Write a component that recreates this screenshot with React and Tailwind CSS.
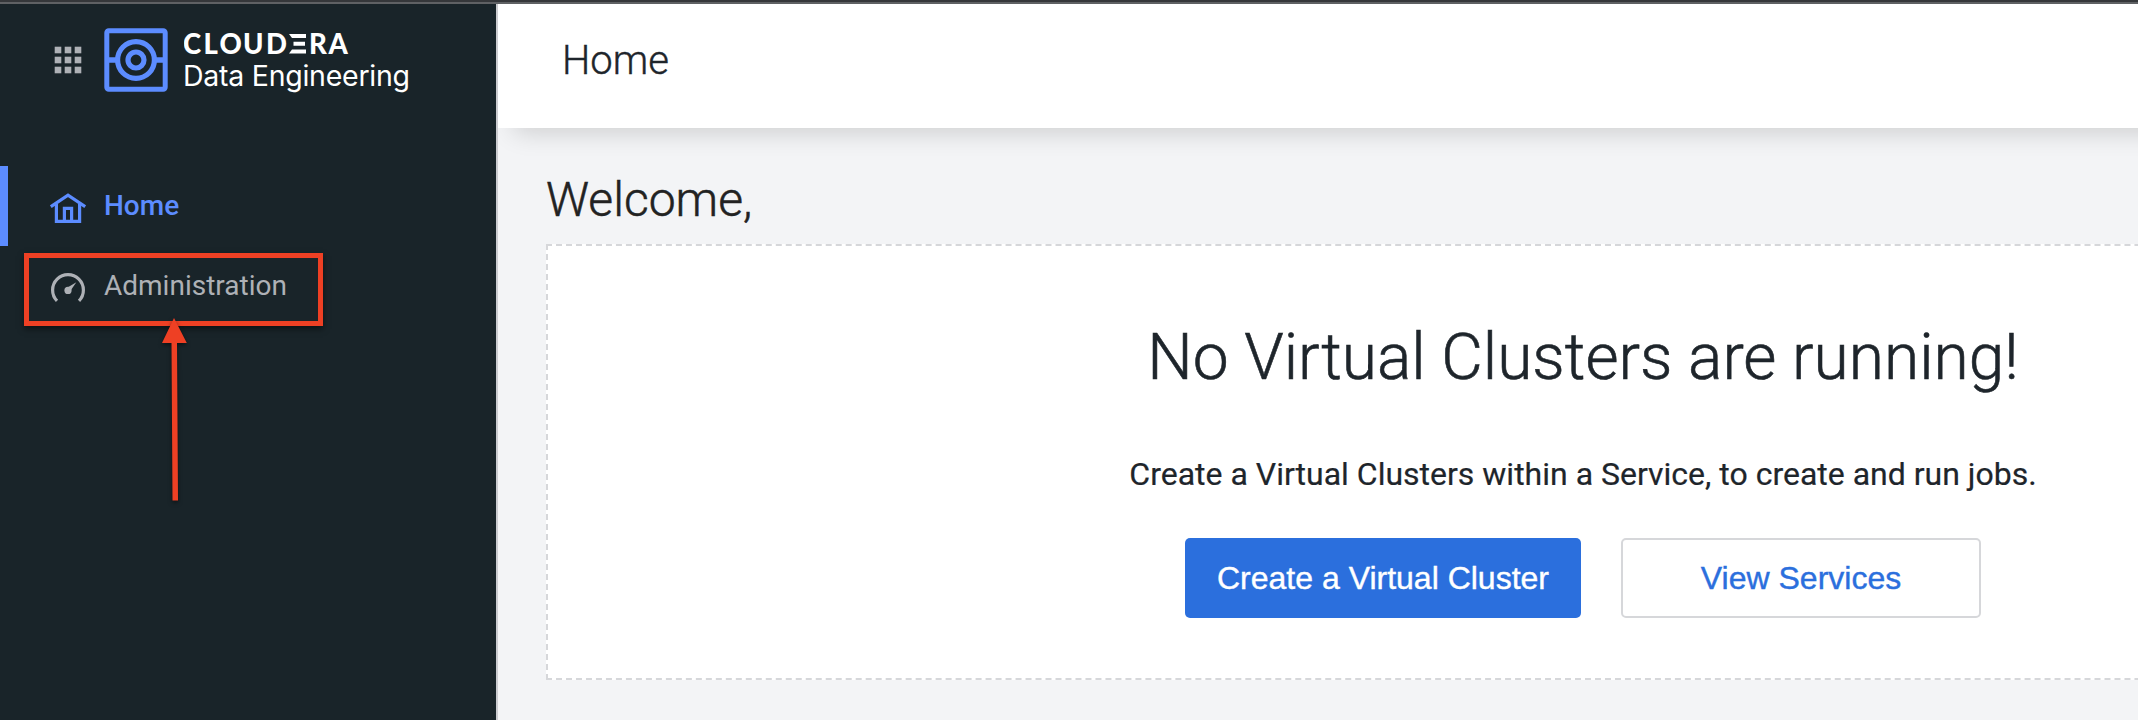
const ROBOTO = "font-['Roboto',sans-serif]";

function AppsGrid() {
  return (
    <svg className="block h-7 w-7 shrink-0" viewBox="0 0 28 28" fill="#aeb1b6">
      {[0.7, 10.7, 20.7].map((y) =>
        [0.7, 10.7, 20.7].map((x) => (
          <rect key={`${x}-${y}`} x={x} y={y} width="6.6" height="6.6" />
        ))
      )}
    </svg>
  );
}

function BrandMark() {
  return (
    <svg className="block h-16 w-16 shrink-0" viewBox="0 0 64 64" fill="none" stroke="#5c8cff" strokeWidth="5">
      <rect x="2.8" y="2.8" width="58.4" height="58.4" rx="2" />
      <circle cx="32" cy="32" r="18.4" strokeWidth="5.2" />
      <circle cx="32" cy="32" r="8" strokeWidth="5.2" />
      <path d="M4 32h10M50 32h10" strokeWidth="5.4" />
    </svg>
  );
}

function HomeIcon() {
  return (
    <svg className="block h-[31px] w-9 shrink-0" viewBox="0 0 36 31" fill="none" stroke="#5c8cff" strokeWidth="3.2">
      <path d="M.8 13.6 18 2.1l17.2 11.5" />
      <path d="M6.400 11v17.400h23.200V11" />
      <path d="M14.400 28V15.400h7.200V28" />
    </svg>
  );
}

function GaugeIcon() {
  return (
    <svg className="block h-[30px] w-9 shrink-0" viewBox="0 0 36 30" fill="none" stroke="#aeb1b6" strokeWidth="3.2">
      <path d="M7 27.8A15.4 15.4 0 1 1 29 27.8" />
      <circle cx="18" cy="17.4" r="3.6" fill="#aeb1b6" stroke="none" />
      <path d="M16.6 15 26.300 9.200 19.8 18.8z" fill="#aeb1b6" stroke="none" />
    </svg>
  );
}

function Sidebar() {
  return (
    <aside className="relative flex w-[498px] shrink-0 flex-col border-r-2 border-[#cbccd0] bg-[#192429]">
      <div className="flex h-[162px] items-start pt-6 pl-[54px]">
        <div className="pt-[18px]">
          <AppsGrid />
        </div>
        <div className="ml-[22px]">
          <BrandMark />
        </div>
        <svg className="ml-4 block h-[68px] w-[240px]" viewBox="0 0 240 68" fill="#ffffff">
          <g className="font-['Lato',sans-serif] text-[27.5px] font-black">
            <text x="-1 19.5 35.500 59 82" y="25.5">CLOUD</text>
            <text x="125 144.500" y="25.5">RA</text>
          </g>
          <path d="M105 6h17v4h-14zM109.500 13.800h11.500v4h-11.500zM108 21.500h14v4H105z" />
          <text x="-1" y="57.500" textLength="227" lengthAdjust="spacing" className="font-['Inter',sans-serif] text-[28.5px]">
            Data Engineering
          </text>
        </svg>
      </div>
      <nav className={`flex flex-col text-[28px] leading-10 ${ROBOTO}`}>
        <a className="flex h-20 items-center border-l-8 border-[#5c8cff] pl-[42px] font-medium text-[#5c8cff]">
          <span className="pt-1"><HomeIcon /></span>
          <span className="ml-[18px]">Home</span>
        </a>
        <a className="flex h-20 items-center pl-[50px] text-[#aeb1b6]">
          <span className="pt-1"><GaugeIcon /></span>
          <span className="ml-[18px]">Administration</span>
        </a>
      </nav>
      <div className="absolute top-[249px] left-6 h-[73px] w-[299px] border-[5px] border-[#ee4024] shadow-[0_3px_6px_rgba(0,0,0,0.5)]" />
      <svg
        className="absolute top-[310px] left-[154px] h-[196px] w-10 drop-shadow-[0_2px_2px_rgba(0,0,0,0.5)]"
        viewBox="0 0 40 196"
        fill="#ee4024"
      >
        <path d="M20 4 32.800 29H23l1 157.500h-5.500L17.500 29H8z" />
      </svg>
    </aside>
  );
}

function EmptyState() {
  return (
    <section className="flex h-[436px] w-[2074px] flex-col items-center border-2 border-dashed border-[#d6d7da] bg-white pt-[74px] text-[#1e252b]">
      <h2 className="text-[64px] leading-[76px] font-light whitespace-nowrap [-webkit-text-stroke:0.6px]">No Virtual Clusters are running!</h2>
      <p className="mt-[58px] text-[32px] leading-10 whitespace-nowrap [-webkit-text-stroke:0.2px]">
        Create a Virtual Clusters within a Service, to create and run jobs.
      </p>
      <div className="mt-[44px] flex gap-10 font-['Liberation_Sans',sans-serif] text-[32px] [-webkit-text-stroke:0.4px]">
        <button className="h-20 w-[396px] rounded-[5px] bg-[#2b6fdd] text-white">
          Create a Virtual Cluster
        </button>
        <button className="h-20 w-[360px] rounded-[5px] border-2 border-[#d6d7da] bg-white text-[#2b6fdd]">
          View Services
        </button>
      </div>
    </section>
  );
}

export default function App() {
  return (
    <div className={`flex h-screen w-full flex-col overflow-hidden bg-[#f3f4f6] ${ROBOTO}`}>
      <div className="h-1 shrink-0 border-b-2 border-[#5f6164] bg-[#35373a]" />
      <div className="flex min-h-0 flex-1">
        <Sidebar />
        <main className="min-w-0 flex-1 overflow-hidden">
          <div className="h-[124px] w-[2200px] bg-white pt-[33px] pl-16 shadow-[8px_12px_24px_-8px_rgba(0,0,0,0.16)]">
            <h1 className="text-[40px] leading-[48px] font-light text-[#1e252b] [-webkit-text-stroke:0.4px]">Home</h1>
          </div>
          <div className="pt-11 pl-12">
            <h1 className="h-[72px] text-[48px] leading-[56px] font-light text-[#222222] [-webkit-text-stroke:0.5px]">Welcome,</h1>
            <EmptyState />
          </div>
        </main>
      </div>
    </div>
  );
}
